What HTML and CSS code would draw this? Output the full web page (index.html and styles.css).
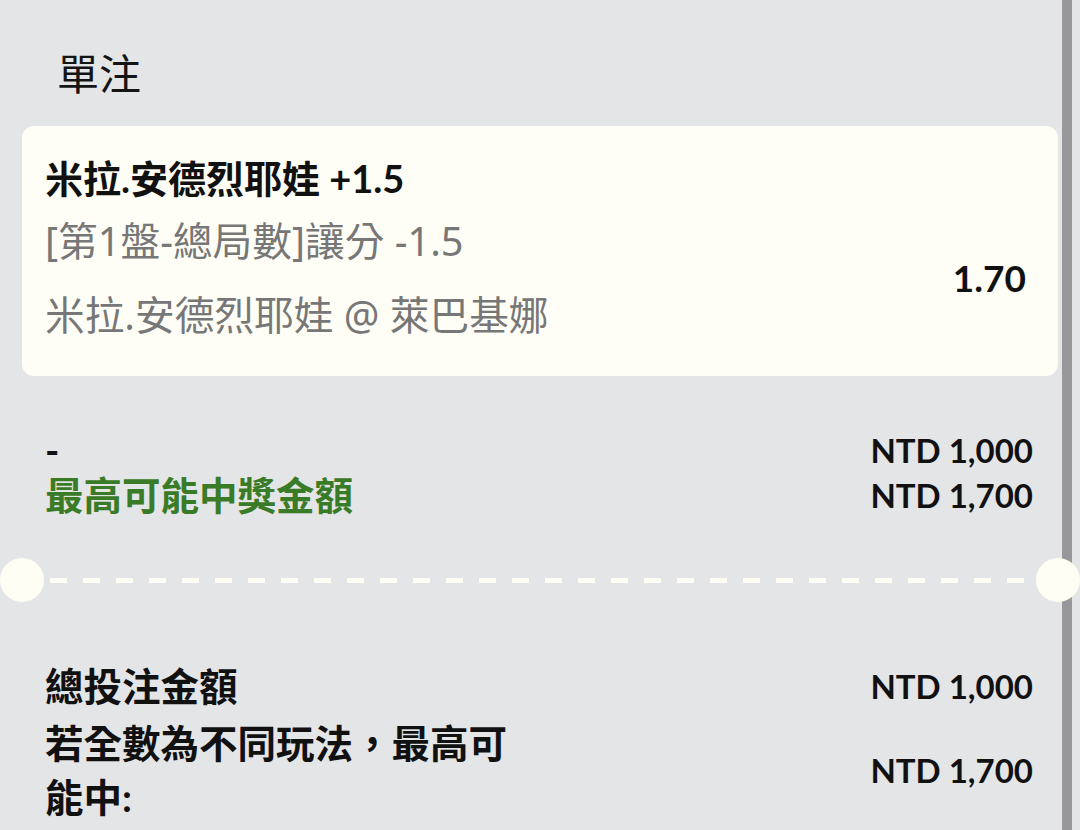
FILE: index.html
```html
<!DOCTYPE html>
<html lang="zh-Hant">
<head>
<meta charset="utf-8">
<title>單注</title>
<link rel="stylesheet" href="styles.css">
</head>
<body>
<div class="screen">
  <div class="content">
    <h1 class="heading">單注</h1>
    <div class="card">
      <div class="sel-title">米拉.安德烈耶娃 +1.5</div>
      <div class="sel-line">[第1盤-總局數]讓分 -1.5</div>
      <div class="sel-line">米拉.安德烈耶娃 @ 萊巴基娜</div>
      <div class="odds">1.70</div>
    </div>
    <div class="summary">
      <div class="label">-</div>
      <div class="value">NTD 1,000</div>
      <div class="label green">最高可能中獎金額</div>
      <div class="value">NTD 1,700</div>
    </div>
    <div class="divider">
      <span class="notch"></span>
      <span class="dashes"></span>
      <span class="notch"></span>
    </div>
    <div class="totals">
      <div class="label">總投注金額</div>
      <div class="value">NTD 1,000</div>
      <div class="label">若全數為不同玩法，最高可能中:</div>
      <div class="value">NTD 1,700</div>
    </div>
  </div>
  <div class="scrollbar"></div>
</div>
</body>
</html>
```
FILE: styles.css
```css
html, body {
  margin: 0;
  padding: 0;
  background: #e4e5e7;
}

body {
  font-family: "Lato", "Noto Sans CJK TC", sans-serif;
  color: #111111;
}

.screen {
  position: relative;
  width: 1080px;
  height: 830px;
  overflow: hidden;
  background: #e4e5e7;
}

.content {
  padding: 0 22px;
}

.heading {
  margin: 0;
  padding: 43px 0 0 35px;
  font-family: "Noto Sans CJK TC", sans-serif;
  font-size: 42px;
  font-weight: 400;
  line-height: 58px;
  color: #141414;
}

.card {
  margin-top: 25px;
  background: #fffef6;
  border-radius: 12px;
  padding: 26px 32px 24px 23px;
  display: grid;
  grid-template-columns: 1fr auto;
}

.sel-title {
  grid-column: 1;
  font-size: 38px;
  font-weight: 700;
  line-height: 52px;
}

.sel-line {
  grid-column: 1;
  font-family: "Noto Sans", "Noto Sans CJK TC", sans-serif;
  font-size: 39.7px;
  font-weight: 400;
  line-height: 74px;
  color: #777777;
}

.odds {
  grid-column: 2;
  grid-row: 2 / 4;
  align-self: center;
  font-size: 37px;
  font-weight: 700;
  line-height: 52px;
}

.summary {
  margin-top: 52px;
  padding: 0 25px 0 23px;
  display: grid;
  grid-template-columns: 1fr auto;
  line-height: 45px;
}

.label {
  font-size: 38.5px;
  font-weight: 700;
}

.green {
  color: #3a7b28;
}

.value {
  font-size: 33px;
  font-weight: 700;
  text-align: right;
}

.divider {
  margin: 40px -22px 0;
  height: 44px;
  display: flex;
  align-items: center;
}

.notch {
  position: relative;
  z-index: 2;
  flex: 0 0 44px;
  height: 44px;
  border-radius: 50%;
  background: #fffef4;
}

.dashes {
  flex: 1;
  height: 5px;
  margin: 0 6px;
  background: repeating-linear-gradient(to right, #fffef4 0 17px, transparent 17px 33px);
}

.totals {
  margin-top: 57px;
  padding: 0 25px 0 23px;
  display: grid;
  grid-template-columns: 470px 1fr;
  row-gap: 3px;
  align-items: center;
  line-height: 54px;
}

.scrollbar {
  position: absolute;
  top: 0;
  bottom: 0;
  left: 1062px;
  width: 10px;
  background: #98989b;
  z-index: 1;
}
```
